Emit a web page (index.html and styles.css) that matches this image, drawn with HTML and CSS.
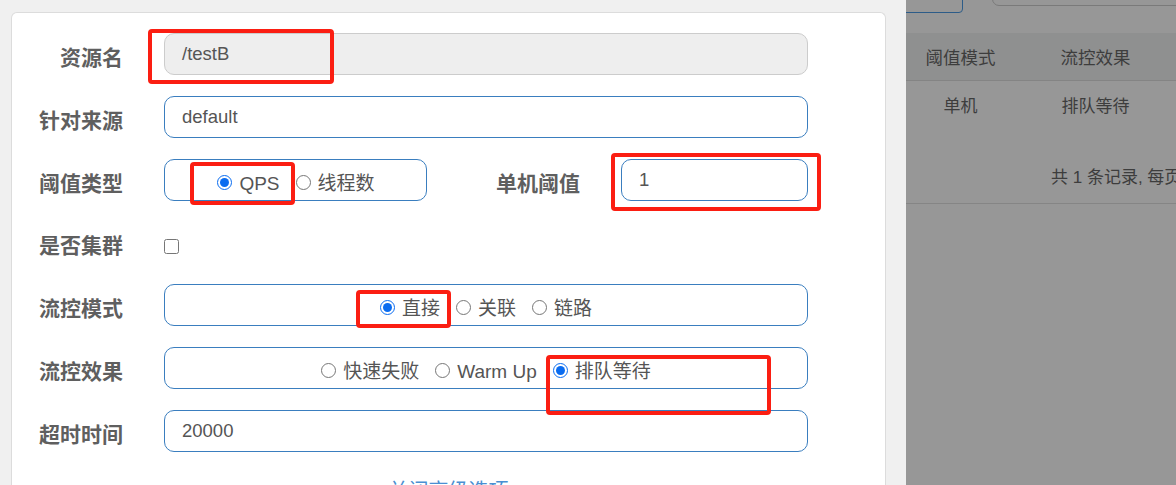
FILE: index.html
```html
<!DOCTYPE html>
<html lang="zh">
<head>
<meta charset="utf-8">
<title>流控规则</title>
<link rel="stylesheet" href="styles.css">
</head>
<body>
<div class="screen">
  <div class="dialog-area">
    <div class="card">
      <form class="form">
        <div class="row">
          <label class="lbl">资源名</label>
          <div class="input disabled">/testB</div>
        </div>
        <div class="row">
          <label class="lbl">针对来源</label>
          <div class="input">default</div>
        </div>
        <div class="row">
          <label class="lbl">阈值类型</label>
          <div class="radio-box short">
            <label class="opt"><input type="radio" name="grade" checked><span>QPS</span></label>
            <label class="opt"><input type="radio" name="grade"><span>线程数</span></label>
          </div>
          <label class="lbl lbl-mid">单机阈值</label>
          <div class="input narrow">1</div>
        </div>
        <div class="row row-check">
          <label class="lbl">是否集群</label>
          <input class="check" type="checkbox">
        </div>
        <div class="row">
          <label class="lbl">流控模式</label>
          <div class="radio-box wide">
            <label class="opt"><input type="radio" name="mode" checked><span>直接</span></label>
            <label class="opt"><input type="radio" name="mode"><span>关联</span></label>
            <label class="opt"><input type="radio" name="mode"><span>链路</span></label>
          </div>
        </div>
        <div class="row">
          <label class="lbl">流控效果</label>
          <div class="radio-box wide">
            <label class="opt"><input type="radio" name="effect"><span>快速失败</span></label>
            <label class="opt"><input type="radio" name="effect"><span>Warm Up</span></label>
            <label class="opt"><input type="radio" name="effect" checked><span>排队等待</span></label>
          </div>
        </div>
        <div class="row">
          <label class="lbl">超时时间</label>
          <div class="input">20000</div>
        </div>
      </form>
      <div class="adv-link">关闭高级选项</div>
    </div>
  </div>
  <div class="table-area">
    <div class="top-btn"></div>
    <div class="top-search"></div>
    <div class="thead">
      <div class="col col-a">阈值模式</div>
      <div class="col col-b">流控效果</div>
    </div>
    <div class="trow">
      <div class="col col-a">单机</div>
      <div class="col col-b">排队等待</div>
    </div>
    <div class="tfoot">共 1 条记录, 每页</div>
  </div>

  <div class="mark m1"></div>
  <div class="mark m2"></div>
  <div class="mark m3"></div>
  <div class="mark m4"></div>
  <div class="mark m5"></div>
</div>
</body>
</html>
```

FILE: styles.css
```css
* { box-sizing: border-box; }
html, body { margin: 0; padding: 0; }
body {
  width: 1176px;
  height: 485px;
  overflow: hidden;
  font-family: "Liberation Sans", "Noto Sans CJK SC", sans-serif;
  background: #f0f0f0;
}
.screen {
  position: relative;
  display: flex;
  width: 1176px;
  height: 485px;
  overflow: hidden;
}
.dialog-area {
  width: 906px;
  flex: none;
  padding: 12px 20px 0 11px;
  background: #f0f0f0;
}
.card {
  background: #fff;
  border: 1px solid #dcdcdc;
  border-bottom: none;
  border-radius: 6px 6px 0 0;
  height: 520px;
  padding-top: 20px;
}
.form {
  display: flex;
  flex-direction: column;
  gap: 21px;
}
.row {
  display: flex;
  align-items: center;
  height: 42px;
  flex: none;
}
.row-check { height: 41px; }
.lbl {
  width: 111px;
  flex: none;
  margin-right: 41px;
  text-align: right;
  font-size: 21px;
  line-height: 28px;
  font-weight: bold;
  color: #5f5f5f;
  padding-top: 7px;
}
.lbl-mid {
  width: 153px;
  margin-right: 41px;
}
.input {
  width: 644px;
  height: 42px;
  flex: none;
  border: 1px solid #3a7ebf;
  border-radius: 10px;
  padding: 0 17px 1px;
  display: flex;
  align-items: center;
  font-size: 18.5px;
  color: #555;
}
.input.disabled {
  background: #eeeeee;
  border-color: #cccccc;
}
.input.narrow {
  width: 187px;
}
.radio-box {
  height: 42px;
  flex: none;
  border: 1px solid #3a7ebf;
  border-radius: 10px;
  display: flex;
  justify-content: center;
  align-items: center;
  padding-top: 8px;
  gap: 16px;
}
.radio-box.short { width: 263px; padding-left: 1px; }
.radio-box.wide { width: 644px; }
.opt {
  display: flex;
  align-items: center;
  gap: 7px;
  font-size: 19px;
  line-height: 24px;
  color: #555;
}
.opt input {
  width: 15px;
  height: 15px;
  margin: 0 0 3px 0;
  accent-color: #0a6cf0;
}
.check {
  width: 15px;
  height: 15px;
  margin: 8px 0 0 0;
}
.adv-link {
  margin-top: 23px;
  text-align: center;
  font-size: 20px;
  color: #4a8fd2;
}

.table-area {
  position: relative;
  flex: 1;
  overflow: hidden;
  background: #979797;
  color: #3d3d3d;
}
.top-btn {
  position: absolute;
  left: -10px;
  top: -10px;
  width: 67px;
  height: 23px;
  border: 1px solid #2d5c88;
  border-radius: 4px;
}
.top-search {
  position: absolute;
  left: 86px;
  top: -10px;
  width: 300px;
  height: 16px;
  border: 1px solid #7a7a7a;
  border-radius: 7px;
}
.thead {
  display: flex;
  margin-top: 33px;
  height: 48px;
  background: #8f9090;
  border-bottom: 1px solid #848484;
  align-items: center;
  font-size: 17.5px;
}
.trow {
  display: flex;
  height: 46px;
  align-items: center;
  font-size: 17px;
}
.col { text-align: center; }
.col-a { width: 110px; }
.col-b { width: 162px; }
.tfoot {
  height: 77px;
  border-bottom: 1px solid #858585;
  padding: 36px 0 0 145px;
  font-size: 17px;
  white-space: nowrap;
}

.mark {
  position: absolute;
  border: 4px solid #fb1e12;
  border-radius: 4px;
}
.m1 { left: 148px; top: 29px; width: 186px; height: 55px; }
.m2 { left: 190px; top: 162px; width: 105px; height: 43px; }
.m3 { left: 611px; top: 153px; width: 210px; height: 58px; }
.m4 { left: 356px; top: 290px; width: 95px; height: 38px; }
.m5 { left: 546px; top: 355px; width: 225px; height: 60px; }
```
